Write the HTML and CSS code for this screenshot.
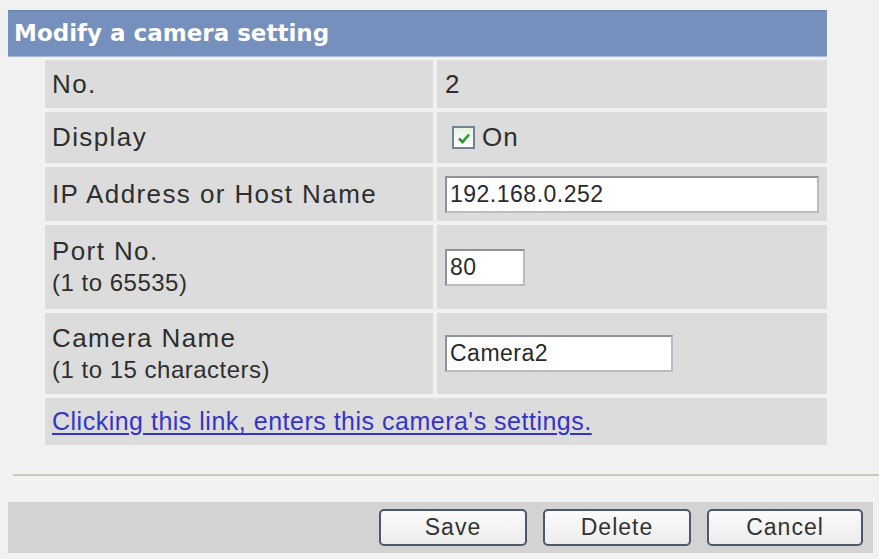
FILE: index.html
```html
<!DOCTYPE html>
<html lang="en">
<head>
    <meta charset="UTF-8">
    <title>Modify a camera setting</title>
    <link rel="stylesheet" href="styles.css">
</head>
<body>
    <div class="panel">
        <h1 class="panel-title">Modify a camera setting</h1>

        <!-- Camera settings -->
        <div class="settings">
            <div class="cell label row-no">No.</div>
            <div class="cell value row-no">2</div>

            <div class="cell label row-display">Display</div>
            <div class="cell value row-display">
                <span class="check">
                    <svg width="14" height="12" viewBox="0 0 14 12">
                        <path d="M2 6.5 L5.5 10 L12 2.5" fill="none" stroke="#2f9a35" stroke-width="2.6"/>
                    </svg>
                </span>
                <span>On</span>
            </div>

            <div class="cell label row-ip">IP Address or Host Name</div>
            <div class="cell value row-ip">
                <input class="field field-ip" type="text" value="192.168.0.252">
            </div>

            <div class="cell label row-port">
                <div>Port No.</div>
                <div class="hint">(1 to 65535)</div>
            </div>
            <div class="cell value row-port">
                <input class="field field-port" type="text" value="80">
            </div>

            <div class="cell label row-name">
                <div>Camera Name</div>
                <div class="hint">(1 to 15 characters)</div>
            </div>
            <div class="cell value row-name">
                <input class="field field-name" type="text" value="Camera2">
            </div>

            <div class="cell link-row">
                <a href="#" class="camera-link">Clicking this link, enters this camera's settings.</a>
            </div>
        </div>
    </div>

    <div class="divider"></div>

    <div class="actions">
        <button class="btn">Save</button>
        <button class="btn">Delete</button>
        <button class="btn btn-wide">Cancel</button>
    </div>
</body>
</html>
```

FILE: styles.css
```css
:root {
    --page-bg: #f1f1f1;
    --row-bg: #dcdcdc;
    --title-bg: #7590bc;
    --text: #2e2e2e;
    --link: #3434c6;
    --bar-bg: #d3d3d3;
}

* {
    margin: 0;
    padding: 0;
    box-sizing: border-box;
}

body {
    background: var(--page-bg);
    color: var(--text);
    font-family: 'Liberation Sans', Arial, sans-serif;
}

.panel {
    width: 819px;
    margin: 10px 0 0 8px;
}

.panel-title {
    height: 47px;
    background: var(--title-bg);
    border-top: 1px solid #6a84ae;
    border-bottom: 1px solid #a9bad6;
    color: #ffffff;
    font-family: 'DejaVu Sans', sans-serif;
    font-size: 23px;
    font-weight: bold;
    line-height: 44px;
    padding-left: 6px;
}

.settings {
    display: grid;
    grid-template-columns: 388px 1fr;
    grid-template-rows: 48px 51px 54px 84px 81px 47px;
    gap: 4px;
    margin: 3px 0 0 37px;
}

.cell {
    background: var(--row-bg);
    display: flex;
    align-items: center;
    font-size: 26px;
    letter-spacing: 1.4px;
}

.label {
    flex-direction: column;
    align-items: flex-start;
    justify-content: center;
    padding-left: 7px;
    line-height: 31px;
}

.hint {
    font-size: 24px;
    letter-spacing: 0.5px;
}

.value {
    padding-left: 8px;
    letter-spacing: 1px;
}

.check {
    width: 23px;
    height: 23px;
    margin: 0 7px 0 7px;
    border: 2px solid #6f8396;
    background: linear-gradient(#e8f3e4, #ffffff);
    display: flex;
    align-items: center;
    justify-content: center;
}

.field {
    height: 37px;
    border: 2px solid #8d9399;
    border-right-color: #b7bcc1;
    border-bottom-color: #b7bcc1;
    background: #ffffff;
    color: #2a2a2a;
    font-family: 'Liberation Sans', Arial, sans-serif;
    font-size: 23px;
    letter-spacing: 0.5px;
    padding: 0 3px;
}

.field-ip {
    width: 374px;
}

.field-port {
    width: 80px;
}

.field-name {
    width: 228px;
}

.link-row {
    grid-column: 1 / 3;
    padding-left: 7px;
    letter-spacing: 0.5px;
}

.camera-link {
    color: var(--link);
    font-size: 25px;
    text-decoration: underline;
    text-underline-offset: 3px;
}

.divider {
    height: 2px;
    background: #c9c9bd;
    margin: 29px 0 0 13px;
}

.actions {
    height: 51px;
    margin: 26px 6px 0 8px;
    background: var(--bar-bg);
    display: flex;
    justify-content: flex-end;
    align-items: center;
    gap: 16px;
    padding-right: 10px;
}

.btn {
    width: 148px;
    height: 37px;
    border: 2px solid #4a5a6c;
    border-radius: 5px;
    background: linear-gradient(#fbfbfb, #ececec);
    color: #333333;
    font-family: 'Liberation Sans', Arial, sans-serif;
    font-size: 23px;
    letter-spacing: 1px;
}

.btn-wide {
    width: 156px;
}
```
